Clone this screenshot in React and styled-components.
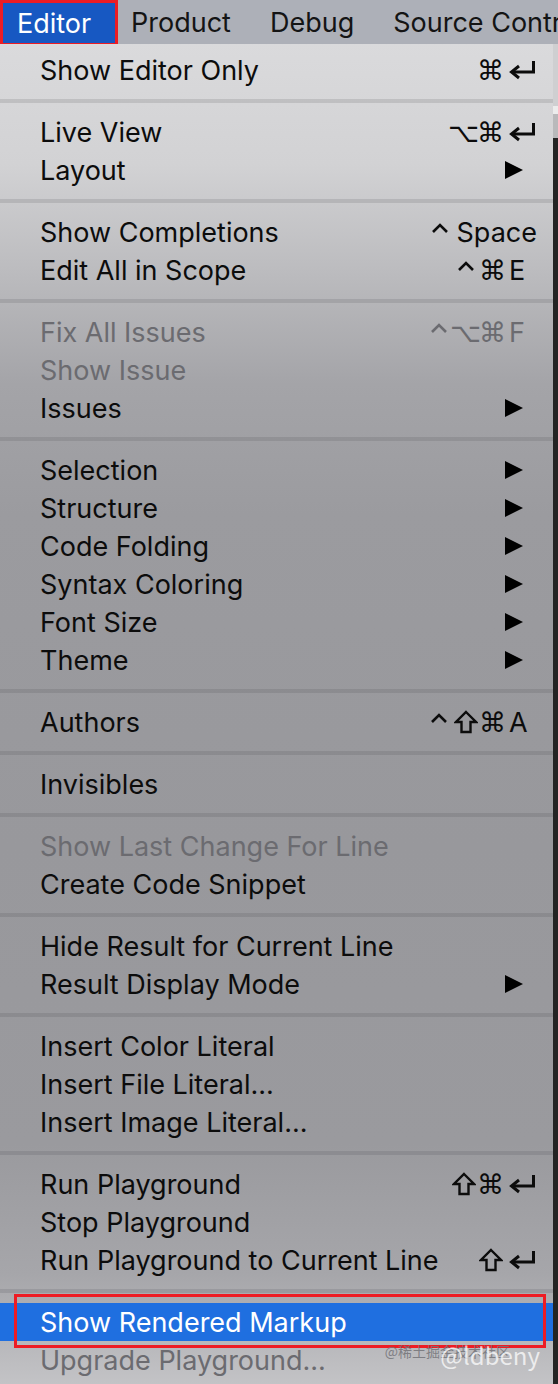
import React from 'react';
import styled, { createGlobalStyle } from 'styled-components';

const GlobalStyle = createGlobalStyle`
  html, body {
    margin: 0;
    padding: 0;
    background: #1e1e1e;
  }
  * { box-sizing: border-box; }
`;

const Page = styled.div`
  position: relative;
  width: 558px;
  height: 1384px;
  overflow: hidden;
  display: flex;
  flex-direction: column;
  font-family: Inter, "Liberation Sans", sans-serif;
`;

const MenuBar = styled.div`
  height: 44px;
  flex: none;
  display: flex;
  align-items: center;
  gap: 39px;
  background: #adb0b8;
  font-size: 27px;
  color: #141414;
  white-space: nowrap;
  overflow: hidden;
`;

const ActiveTitle = styled.div`
  flex: none;
  width: 118px;
  height: 46px;
  margin-top: 2px;
  margin-right: -26px;
  padding-left: 14px;
  display: flex;
  align-items: center;
  background: #1758c2;
  color: #fff;
  border: 3px solid #ec1c24;
`;

const Title = styled.div`
  flex: none;
`;

const Body = styled.div`
  flex: 1;
  display: flex;
`;

const Menu = styled.div`
  width: 553px;
  padding-top: 7px;
  background: linear-gradient(
    180deg,
    #dadadc 0px,
    #d2d2d4 120px,
    #bbbbbe 230px,
    #a4a4a8 340px,
    #9b9b9f 470px,
    #98989c 800px,
    #9a9a9e 1100px,
    #a6a6aa 1230px,
    #c3c3c6 1340px
  );
`;

const Strip = styled.div`
  flex: 1;
  display: flex;
  flex-direction: column;
`;

const StripPart = styled.div`
  height: ${p => p.h}px;
  background: ${p => p.bg};
`;

const Separator = styled.div`
  height: 24px;
  display: flex;
  align-items: center;
  &::after {
    content: '';
    flex: 1;
    height: 4px;
    background: rgba(60, 60, 70, 0.15);
  }
`;

const Item = styled.div`
  height: 38px;
  display: flex;
  align-items: center;
  padding: 0 16px 0 40px;
  font-size: 27px;
  white-space: nowrap;
  color: ${p => (p.selected ? '#fff' : p.disabled ? '#6b6b70' : '#0c0c0c')};
  background: ${p => (p.selected ? '#1f6fe0' : 'transparent')};
`;

const Label = styled.span`
  flex: 1;
`;

const Shortcut = styled.span`
  display: flex;
  align-items: center;
  color: inherit;
`;

const Mod = styled.span`
  width: 27px;
  height: 30px;
  display: inline-flex;
  align-items: center;
  justify-content: center;
  font-family: "DejaVu Sans", sans-serif;
  font-size: 27px;
  line-height: 1;
`;

const Key = styled.span`
  min-width: 28px;
  margin-left: 3px;
  display: inline-flex;
  align-items: center;
`;

const Arrow = styled.svg`
  width: 18px;
  height: 20px;
  margin-right: 14px;
  fill: #000;
`;

const Highlight = styled.div`
  position: absolute;
  left: 14px;
  top: 1294px;
  width: 532px;
  height: 54px;
  border: 3px solid #ee1c24;
  pointer-events: none;
`;

const Watermark = styled.div`
  position: absolute;
  right: 18px;
  bottom: 12px;
  display: grid;
  justify-items: end;
  align-items: center;
  font-family: "Noto Sans CJK SC", "Liberation Sans", sans-serif;
  & > * { grid-area: 1 / 1; }
`;

const MarkSmall = styled.span`
  margin-right: 30px;
  margin-bottom: 8px;
  font-size: 14px;
  color: rgba(115, 115, 120, 0.85);
`;

const MarkBig = styled.span`
  font-size: 24px;
  color: rgba(255, 255, 255, 0.72);
`;

const ReturnIcon = () => (
  <svg width="30" height="22" viewBox="0 0 30 22" fill="none" stroke="currentColor" strokeWidth="3">
    <path d="M26.5 2 V13 H6" />
    <path d="M12 7 L4.5 13 L12 19" />
  </svg>
);

const CtrlIcon = () => (
  <svg width="18" height="22" viewBox="0 0 18 22" fill="none" stroke="currentColor" strokeWidth="2.6">
    <path d="M2 11 L9 4 L16 11" />
  </svg>
);

const ShiftIcon = () => (
  <svg width="24" height="24" viewBox="0 0 24 24" fill="none" stroke="currentColor" strokeWidth="2.4" strokeLinejoin="miter">
    <path d="M12 2 L22 12 H16.5 V22 H7.5 V12 H2 Z" />
  </svg>
);

const modGlyph = {
  ctrl: <CtrlIcon />,
  shift: <ShiftIcon />,
  opt: '⌥',
  cmd: '⌘',
};

const groups = [
  [{ label: 'Show Editor Only', mods: ['cmd'], key: 'return' }],
  [
    { label: 'Live View', mods: ['opt', 'cmd'], key: 'return' },
    { label: 'Layout', sub: true },
  ],
  [
    { label: 'Show Completions', mods: ['ctrl'], key: 'Space' },
    { label: 'Edit All in Scope', mods: ['ctrl', 'cmd'], key: 'E' },
  ],
  [
    { label: 'Fix All Issues', disabled: true, mods: ['ctrl', 'opt', 'cmd'], key: 'F' },
    { label: 'Show Issue', disabled: true },
    { label: 'Issues', sub: true },
  ],
  [
    { label: 'Selection', sub: true },
    { label: 'Structure', sub: true },
    { label: 'Code Folding', sub: true },
    { label: 'Syntax Coloring', sub: true },
    { label: 'Font Size', sub: true },
    { label: 'Theme', sub: true },
  ],
  [{ label: 'Authors', mods: ['ctrl', 'shift', 'cmd'], key: 'A' }],
  [{ label: 'Invisibles' }],
  [
    { label: 'Show Last Change For Line', disabled: true },
    { label: 'Create Code Snippet' },
  ],
  [
    { label: 'Hide Result for Current Line' },
    { label: 'Result Display Mode', sub: true },
  ],
  [
    { label: 'Insert Color Literal' },
    { label: 'Insert File Literal...' },
    { label: 'Insert Image Literal...' },
  ],
  [
    { label: 'Run Playground', mods: ['shift', 'cmd'], key: 'return' },
    { label: 'Stop Playground' },
    { label: 'Run Playground to Current Line', mods: ['shift'], key: 'return' },
  ],
  [
    { label: 'Show Rendered Markup', selected: true },
    { label: 'Upgrade Playground...', disabled: true },
  ],
];

function MenuItem({ item }) {
  return (
    <Item disabled={item.disabled} selected={item.selected}>
      <Label>{item.label}</Label>
      {item.key && (
        <Shortcut>
          {item.mods.map(m => (
            <Mod key={m}>{modGlyph[m]}</Mod>
          ))}
          <Key>{item.key === 'return' ? <ReturnIcon /> : item.key}</Key>
        </Shortcut>
      )}
      {item.sub && (
        <Arrow viewBox="0 0 18 20">
          <polygon points="0,1 18,10 0,19" />
        </Arrow>
      )}
    </Item>
  );
}

export default function App() {
  return (
    <Page>
      <GlobalStyle />
      <MenuBar>
        <ActiveTitle>Editor</ActiveTitle>
        <Title>Product</Title>
        <Title>Debug</Title>
        <Title>Source Control</Title>
      </MenuBar>
      <Body>
        <Menu>
          {groups.map((group, i) => (
            <React.Fragment key={i}>
              {i > 0 && <Separator />}
              {group.map(item => (
                <MenuItem key={item.label} item={item} />
              ))}
            </React.Fragment>
          ))}
        </Menu>
        <Strip>
          <StripPart h={62} bg="#cfcfd1" />
          <StripPart h={8} bg="#ececec" />
          <StripPart h={24} bg="#b9b9bb" />
          <StripPart h={1246} bg="#242424" />
        </Strip>
      </Body>
      <Highlight />
      <Watermark>
        <MarkSmall>@稀土掘金技术社区</MarkSmall>
        <MarkBig>@ldbeny</MarkBig>
      </Watermark>
    </Page>
  );
}
